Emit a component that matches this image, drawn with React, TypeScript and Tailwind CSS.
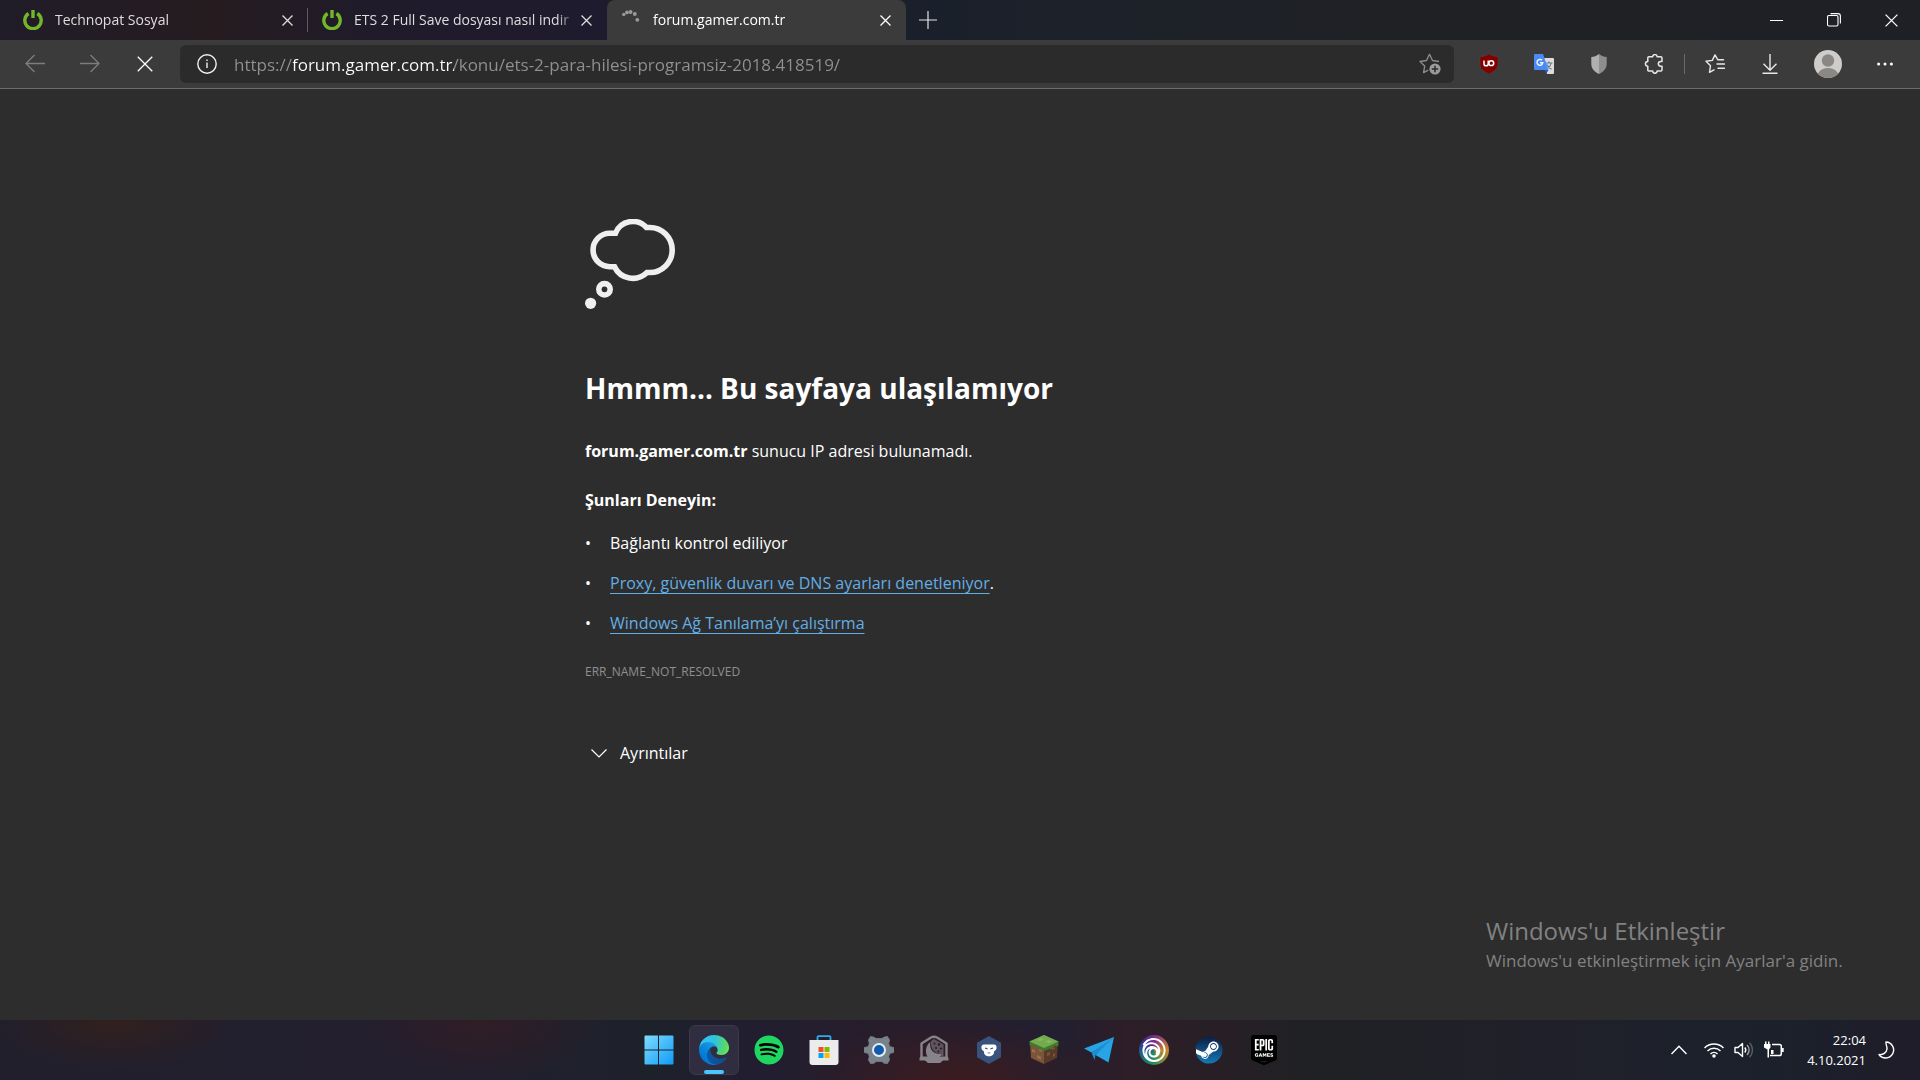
import { useState } from 'react';
import type { ReactNode } from 'react';
import { FaSpotify, FaSteam } from 'react-icons/fa';
import { SiEpicgames, SiUbisoft } from 'react-icons/si';

type IconProps = { className?: string };

function CloseIcon({ className = 'size-[11px]' }: IconProps) {
  return (
    <svg className={className} viewBox="0 0 11 11" fill="none" stroke="currentColor" strokeWidth="1.3">
      <path d="M.5.5l10 10M10.5.5l-10 10" vectorEffect="non-scaling-stroke" />
    </svg>
  );
}

function PowerIcon() {
  return (
    <svg className="size-5 shrink-0" viewBox="0 0 20 20" fill="none" stroke="#72b62b" strokeWidth="3.4">
      <path d="M5.6 3.5a8.2 8.2 0 1 0 8.8 0" />
      <path d="M10 0v8" />
    </svg>
  );
}

function SpinnerIcon() {
  return (
    <svg className="size-5 shrink-0" viewBox="0 0 20 20" fill="#9b9b9b">
      <circle cx="2.8" cy="4.4" r="1.7" />
      <circle cx="6" cy="2.4" r="1.9" />
      <circle cx="9.6" cy="2" r="1.9" />
      <circle cx="13.8" cy="4" r="1.9" />
      <circle cx="16.3" cy="9.8" r="1.9" />
    </svg>
  );
}

function ThoughtIcon() {
  return (
    <svg className="size-[90px]" viewBox="0 0 90 90" fill="none" stroke="#efefef" strokeWidth="5.6">
      <path d="M24.8 14.2H30.5A18.7 18.7 0 0 1 61.5 8.5H64.7A22.5 22.5 0 0 1 64.7 53.5H62A20.3 20.3 0 0 1 29.5 47.7H24.8A16.75 16.75 0 0 1 24.8 14.2Z" />
      <circle cx="19.5" cy="70.3" r="5.7" />
      <circle cx="5.6" cy="84.3" r="5.6" fill="#efefef" stroke="none" />
    </svg>
  );
}

function UblockIcon() {
  return (
    <svg className="size-5" viewBox="0 0 20 20">
      <path d="M10 0c3 2 6 2.600 9 2.700v7.600c0 4.500-4 7.200-9 9.700-5-2.500-9-5.200-9-9.700V2.700C4 2.600 7 2 10 0z" fill="#800000" stroke="#5f4a4a" strokeWidth=".4" />
      <g fill="none" stroke="#fff" strokeWidth="1.500">
        <path d="M5 6.500v3.200a2 2 0 0 0 4.200 0V6.500" />
        <circle cx="12.300" cy="9.200" r="2.400" />
      </g>
    </svg>
  );
}

function TranslateIcon() {
  return (
    <svg className="size-5" viewBox="0 0 20 20">
      <path d="M8 4h11a1 1 0 0 1 1 1v14a1 1 0 0 1-1 1h-6z" fill="#dcdcdc" />
      <path d="M11.500 9h7M15 7.500V9M17.300 9c-.6 2.600-2.300 4.600-4.300 5.800M13 10.500c.8 2 2.500 3.800 4.600 4.800" fill="none" stroke="#607988" strokeWidth="1.100" />
      <path d="M10.500 16h4l-2.500 4z" fill="#2a52b8" />
      <path d="M1 0h8l5.500 16H1a1 1 0 0 1-1-1V1a1 1 0 0 1 1-1z" fill="#4a8af4" />
      <path d="M8 6.300A2.900 2.900 0 1 0 8.800 8.700H6" fill="none" stroke="#f1f5fe" strokeWidth="1.400" />
    </svg>
  );
}

function ShieldIcon() {
  return (
    <svg className="size-5" viewBox="0 0 20 20">
      <path d="M10 0c2.500 2 5 2.800 7.700 3v7c0 4.800-3.500 7.800-7.700 10z" fill="#8e8e8e" />
      <path d="M10 0C7.500 2 5 2.800 2.300 3v7c0 4.800 3.500 7.800 7.700 10z" fill="#b0b0b0" />
    </svg>
  );
}

function PuzzleIcon() {
  return (
    <svg className="size-5" viewBox="0 0 20 20" fill="none" stroke="#e8e8e8" strokeWidth="1.500" strokeLinejoin="round">
      <path d="M5 2.800h3.700a2.200 2.200 0 0 1 4.400 0h3.600a1.300 1.300 0 0 1 1.300 1.300v3.400h-1.300a2.300 2.300 0 0 0 0 4.700h1.300v3.600a1.300 1.300 0 0 1-1.300 1.300h-3.600a2.200 2.200 0 0 1-4.400 0H5a1.200 1.200 0 0 1-1.200-1.300v-3.600a2.300 2.300 0 0 1 0-4.700V4.100A1.300 1.300 0 0 1 5 2.800z" />
    </svg>
  );
}

function FavoritesIcon() {
  return (
    <svg className="size-5" viewBox="0 0 20 20" fill="none" stroke="#e8e8e8" strokeWidth="1.400" strokeLinejoin="round" strokeLinecap="round">
      <path d="M18.500 5.800h-5.600L10 .9 7.300 6.400 1 7.300l4.500 4.400-1 6.600L9 15.800M12 10h7.500M13 14.200h6.500" />
    </svg>
  );
}

function AddFavoriteIcon() {
  return (
    <svg className="size-[22px]" viewBox="0 0 22 22" fill="none" stroke="#8b8b8b" strokeWidth="1.400" strokeLinejoin="round">
      <path d="M20 8.500l-6.500-1L10.500 1.300 7.500 7.500 1 8.500l4.700 4.600-1.100 6.500 4.600-2.400" />
      <circle cx="16" cy="16" r="5.600" fill="#9b9b9b" stroke="none" />
      <path d="M16 12.800v6.400M12.800 16h6.400" stroke="#2b2b2b" strokeWidth="1.500" />
    </svg>
  );
}

function DownloadIcon() {
  return (
    <svg className="size-5" viewBox="0 0 20 20" fill="none" stroke="#e8e8e8" strokeWidth="1.400">
      <path d="M10 0v16M3.500 9.800l6.500 6.500 6.500-6.500M2.500 19.300h15" />
    </svg>
  );
}

function AvatarIcon() {
  return (
    <svg className="size-7" viewBox="0 0 28 28">
      <clipPath id="avatarClip">
        <circle cx="14" cy="14" r="14" />
      </clipPath>
      <g clipPath="url(#avatarClip)">
        <rect width="28" height="28" fill="#cfcdcb" />
        <circle cx="14" cy="10.500" r="6.200" fill="#8b8785" />
        <ellipse cx="14" cy="26" rx="10.500" ry="8" fill="#8b8785" />
      </g>
    </svg>
  );
}

function WindowsIcon() {
  return (
    <svg className="size-[30px]" viewBox="0 0 30 30">
      <linearGradient id="winGradient" x1="0" y1="0" x2="1" y2="1" gradientUnits="objectBoundingBox">
        <stop offset="0" stopColor="#7fdcfc" />
        <stop offset="1" stopColor="#0f9bf8" />
      </linearGradient>
      <path d="M1.500.5H14v14H.5v-13a1 1 0 0 1 1-1zM15 .5h13.500a1 1 0 0 1 1 1v13H15zM.5 15.500H14v14H1.500a1 1 0 0 1-1-1zM15 15.500h14.500v13a1 1 0 0 1-1 1H15z" fill="url(#winGradient)" />
    </svg>
  );
}

function EdgeIcon() {
  return (
    <svg className="size-[30px]" viewBox="0 0 256 256">
      <defs>
        <linearGradient id="edgeDark" x1="60" y1="177" x2="237" y2="177" gradientUnits="userSpaceOnUse">
          <stop offset="0" stopColor="#0c59a4" />
          <stop offset="1" stopColor="#114a8b" />
        </linearGradient>
        <linearGradient id="edgeMid" x1="154" y1="100" x2="46" y2="218" gradientUnits="userSpaceOnUse">
          <stop offset="0" stopColor="#1b9de2" />
          <stop offset=".7" stopColor="#0680d7" />
          <stop offset="1" stopColor="#0078d4" />
        </linearGradient>
        <radialGradient id="edgeLight" cx="30" cy="45" r="235" gradientUnits="userSpaceOnUse">
          <stop offset="0" stopColor="#35c1f1" />
          <stop offset=".45" stopColor="#2fc2df" />
          <stop offset=".9" stopColor="#5bdc5c" />
          <stop offset="1" stopColor="#66eb6e" />
        </radialGradient>
      </defs>
      <path fill="url(#edgeDark)" d="M231.070 190.540c-3.380 1.760-6.850 3.340-10.420 4.730a101.400 101.400 0 0 1-35.680 6.400c-47.020 0-87.980-32.350-87.980-73.860a31.420 31.420 0 0 1 16.390-27.300c-42.530 1.790-53.460 46.100-53.460 72.070 0 73.420 67.670 80.870 82.250 80.870 7.860 0 19.720-2.290 26.840-4.540l1.300-.44a128.340 128.340 0 0 0 66.600-52.800 4 4 0 0 0-5.840-5.130z" />
      <path fill="url(#edgeMid)" d="M105.730 241.420a79.200 79.200 0 0 1-22.740-21.340 80.720 80.720 0 0 1 29.530-120c3.120-1.470 8.450-4.130 15.540-4a32.350 32.350 0 0 1 25.690 13 31.880 31.880 0 0 1 6.360 18.660c0-.21 24.460-79.600-80-79.600-43.900 0-80 41.660-80 78.210a130.150 130.150 0 0 0 12.110 56 128 128 0 0 0 156.380 67.110 75.550 75.550 0 0 1-62.780-8z" />
      <path fill="url(#edgeLight)" d="M152.330 148.860c-.81 1.050-3.300 2.500-3.300 5.660 0 2.610 1.700 5.120 4.720 7.230 14.380 10 41.490 8.680 41.560 8.680a59.560 59.560 0 0 0 30.270-8.350A61.380 61.380 0 0 0 256 109.190c.26-22.410-8-37.310-11.340-43.910C223.460 23.840 177.720 0 128 0A128 128 0 0 0 0 126.200c.48-36.540 36.800-66.050 80-66.050 3.500 0 23.460.34 42 10.070 16.340 8.580 24.900 18.940 30.850 29.210 6.180 10.670 7.280 24.150 7.280 29.520 0 5.370-2.740 13.330-7.800 19.910z" />
    </svg>
  );
}

function StoreIcon() {
  return (
    <svg className="size-[30px]" viewBox="0 0 30 30">
      <path d="M8.500 6V2.200a1 1 0 0 1 1-1h11a1 1 0 0 1 1 1V6" fill="none" stroke="#28b0ee" strokeWidth="1.800" />
      <path d="M.5 5h29v22a3 3 0 0 1-3 3h-23a3 3 0 0 1-3-3z" fill="#ececec" />
      <path d="M9.500 12h5v5h-5z" fill="#f25022" />
      <path d="M15.500 12h5v5h-5z" fill="#7fba00" />
      <path d="M9.500 18h5v5h-5z" fill="#00a4ef" />
      <path d="M15.500 18h5v5h-5z" fill="#ffb900" />
    </svg>
  );
}

function SettingsIcon() {
  return (
    <svg className="size-[30px]" viewBox="0 0 30 30">
      <path
        d="M6.500 1.500l3.500.7 2 1.300h6l2-1.300 3.500-.7 2 3.500-.8 3.500 1 3 4.300 1.200v4.600L25.700 18.500l-1 3 .8 3.500-2 3.500-3.500-.3-2-1.700h-6l-2 1.700-3.500.3-2-3.500.8-3.500-1-3L0 17.300v-4.600l4.300-1.200 1-3L4.500 5z"
        fill="#78828b"
        stroke="#78828b"
        strokeWidth=".8"
        strokeLinejoin="round"
      />
      <circle cx="15" cy="15" r="6" fill="#0f5cae" stroke="#e8ebee" strokeWidth="2" />
    </svg>
  );
}

function NightIcon() {
  return (
    <svg className="size-[30px]" viewBox="0 0 30 30">
      <path d="M2.500 22V8.500L12 2.500Q15 1 18 2.500l9.500 6V22" fill="none" stroke="#86838a" strokeWidth="2.400" strokeLinejoin="round" />
      <g fill="#86838a">
        <path d="M11.500 7c-1.500 6 1.500 12.500 11.500 12-1 2-3 3.500-5 3.500H9C5.500 17.500 6.500 10 11.500 7z" />
        <path d="M1.500 21.500h27l1 1.500v2.500h-5.500l-3 2.500h-12l-3-2.500H.5V23z" />
        <path d="M12 6l3-2 9.500 5.500V21H22l1-2c-6 0-10.500-4-11-9z" opacity=".55" />
      </g>
      <g fill="#2b1c28">
        <circle cx="15.500" cy="8.500" r="1" />
        <circle cx="20" cy="9.500" r="1.200" />
        <circle cx="17" cy="13" r="1" />
        <circle cx="22" cy="13.500" r="1.100" />
        <circle cx="19.500" cy="16.500" r="1.100" />
      </g>
    </svg>
  );
}

function GorillaIcon() {
  return (
    <svg className="size-[30px]" viewBox="0 0 30 30">
      <path d="M15 1l12 6.800v14.400L15 29 3 22.200V7.800z" fill="#38527d" />
      <path d="M10 9.500h10c2 0 3 2 2.500 4-.3 1.500-1.500 2.500-2.500 2.800.5 3-2 5-5 5s-5.500-2-5-5c-1-.3-2.200-1.300-2.500-2.800-.5-2 .5-4 2.500-4z" fill="#fff" />
      <path d="M11 13l2.500.9M19 13l-2.500.9M13.800 17.800h.8M15.400 17.800h.8" stroke="#38527d" strokeWidth="1.300" />
    </svg>
  );
}

function GrassBlockIcon() {
  return (
    <svg className="size-[30px]" viewBox="0 0 30 30">
      <path d="M1 8l14 6v15L2 23z" fill="#7b5539" />
      <path d="M29 8l-14 6v15l13-6z" fill="#573a28" />
      <path d="M3 14l3 1v3l-3-1zM8 20l4 1.700v3l-4-1.700zM10 14l3 1v2l-3-1z" fill="#9a6d4b" />
      <path d="M18 18l3-1v3l-3 1zM24 19l2-1v3l-2 1zM23 13l3-1v2l-3 1z" fill="#7b5539" />
      <path d="M15 0l14.500 6.500v4.300l-2.500.7v-1l-3 1.500v1.500l-3 1v-1L15 16l-3-1v-1l-3-.5v-1.500L5 11v1L.5 10V6.500z" fill="#3f7a2d" />
      <path d="M15 0l14.500 6.500L15 13 .5 6.500z" fill="#75aa51" />
      <path d="M12 3l3 1.300L11 6 8 5zM19 5l4 1.500-3 1.500-3-1.500z" fill="#87bc60" />
    </svg>
  );
}

function TelegramIcon() {
  return (
    <svg className="size-[30px]" viewBox="0 0 30 30">
      <path d="M30 2L0 13.500l7.500 4L22 9 11.500 20l13 7.500z" fill="#28a4e6" />
      <path d="M7.500 17.500L30 2 11.500 20l-1 5z" fill="#1c8fd0" />
    </svg>
  );
}

function UbisoftIcon() {
  return (
    <span className="flex size-[30px] items-center justify-center rounded-full bg-[conic-gradient(#7b2a8c,#c8862c_90deg,#7d8c3a_140deg,#1d8a5f_190deg,#1c6a8c_250deg,#3b2c96_310deg,#7b2a8c)]">
      <SiUbisoft className="size-6 text-white" />
    </span>
  );
}

function SteamIcon() {
  return (
    <span className="flex size-7 rounded-full bg-[radial-gradient(circle_closest-side,#fff_92%,transparent_94%)]">
      <svg className="size-7" viewBox="0 0 28 28">
        <linearGradient id="steamGradient" x1="0" y1="0" x2="0" y2="1">
          <stop offset="0" stopColor="#0f1c40" />
          <stop offset="1" stopColor="#1579b8" />
        </linearGradient>
        <FaSteam size={28} fill="url(#steamGradient)" />
      </svg>
    </span>
  );
}

function EpicIcon() {
  return (
    <span className="flex h-[30px] items-center bg-[linear-gradient(#fff,#fff)] bg-[length:20px_22px] bg-[position:center_4px] bg-no-repeat">
      <SiEpicgames className="size-[30px] text-black" />
    </span>
  );
}

const apps: { name: string; icon: ReactNode; active?: boolean }[] = [
  { name: 'Başlat', icon: <WindowsIcon /> },
  { name: 'Microsoft Edge', icon: <EdgeIcon />, active: true },
  { name: 'Spotify', icon: <FaSpotify className="size-[30px] rounded-full bg-[radial-gradient(circle,#000_60%,transparent_62%)] text-[#1ed760]" /> },
  { name: 'Microsoft Store', icon: <StoreIcon /> },
  { name: 'Ayarlar', icon: <SettingsIcon /> },
  { name: 'Gece', icon: <NightIcon /> },
  { name: 'Goril', icon: <GorillaIcon /> },
  { name: 'Minecraft', icon: <GrassBlockIcon /> },
  { name: 'Telegram', icon: <TelegramIcon /> },
  { name: 'Ubisoft Connect', icon: <UbisoftIcon /> },
  { name: 'Steam', icon: <SteamIcon /> },
  { name: 'Epic Games', icon: <EpicIcon /> },
];

const extensions = [
  { name: 'uBlock Origin', icon: <UblockIcon /> },
  { name: 'Google Çeviri', icon: <TranslateIcon /> },
  { name: 'Koruma', icon: <ShieldIcon /> },
  { name: 'Uzantılar', icon: <PuzzleIcon /> },
];

const tabs = [
  { title: 'Technopat Sosyal', icon: <PowerIcon /> },
  { title: 'ETS 2 Full Save dosyası nasıl indir', icon: <PowerIcon /> },
  { title: 'forum.gamer.com.tr', icon: <SpinnerIcon /> },
];

function TabBar() {
  const activeTab = 2;

  return (
    <header className="flex h-10 bg-[linear-gradient(90deg,#201c28,#261c20_11%,#1f1b2b_20%,#1f1b2e_31%,#1a202b_48%,#1c212a_55%,#202124_75%,#1f2026)]">
      {tabs.map((tab, i) => (
        <div
          key={tab.title}
          className={`flex w-[299px] min-w-0 items-center pr-[15px] pl-[14px] first:w-[308px] first:pl-[23px] ${
            i === activeTab ? 'rounded-t-lg bg-[#3b3b3b] text-white' : 'text-[#dedede]'
          }`}
        >
          {tab.icon}
          <button className="ml-3 min-w-0 flex-1 overflow-hidden mask-r-from-[calc(100%-20px)] text-left text-sm whitespace-nowrap">
            {tab.title}
          </button>
          <button className="ml-1 shrink-0" aria-label="Sekmeyi kapat">
            <CloseIcon />
          </button>
          {i === 0 && <span className="-mr-[15px] ml-[14px] h-6 w-px bg-[#5d5b60]" />}
        </div>
      ))}
      <button className="flex w-11 items-center justify-center text-[#e4e4e4]" aria-label="Yeni sekme">
        <svg className="size-[18px]" viewBox="0 0 18 18" stroke="currentColor" strokeWidth="1.200">
          <path d="M9 0v18M0 9h18" />
        </svg>
      </button>
      <div className="ml-auto flex text-white">
        <button className="flex w-[57px] items-center justify-center" aria-label="Simge durumuna küçült">
          <span className="h-px w-[13px] bg-white" />
        </button>
        <button className="flex w-[57px] items-center justify-center" aria-label="Önceki boyut">
          <svg className="size-[14px]" viewBox="0 0 14 14" fill="none" stroke="currentColor" strokeWidth="1.100">
            <rect x=".5" y="2.500" width="10.500" height="10.500" rx="1.500" />
            <path d="M3.500.6H11A2.400 2.400 0 0 1 13.400 3v7.500" />
          </svg>
        </button>
        <button className="flex w-[58px] items-center justify-center" aria-label="Kapat">
          <CloseIcon className="size-[13px]" />
        </button>
      </div>
    </header>
  );
}

function Toolbar() {
  const [url, setUrl] = useState('https://forum.gamer.com.tr/konu/ets-2-para-hilesi-programsiz-2018.418519/');

  return (
    <nav className="flex h-[49px] items-center border-b border-[#6b6b6b] bg-[#3b3b3b]">
      <div className="flex w-[180px] items-center pl-[15px] text-[#7d7d7d]">
        <button className="flex w-10 justify-center" aria-label="Geri">
          <svg className="size-5" viewBox="0 0 20 20" fill="none" stroke="currentColor" strokeWidth="1.300">
            <path d="M20 9.500H1M9.500 1L1 9.500 9.500 18" />
          </svg>
        </button>
        <button className="ml-[15px] flex w-10 justify-center" aria-label="İleri">
          <svg className="size-5" viewBox="0 0 20 20" fill="none" stroke="currentColor" strokeWidth="1.300">
            <path d="M0 9.500h19M10.500 1L19 9.500 10.500 18" />
          </svg>
        </button>
        <button className="ml-[15px] flex w-10 justify-center text-white" aria-label="Durdur">
          <CloseIcon className="size-4" />
        </button>
      </div>
      <div className="flex h-[38px] flex-1 items-center rounded-md bg-[#2b2b2b] pr-[13px] pl-[17px]">
        <button aria-label="Site bilgileri">
          <svg className="size-5" viewBox="0 0 20 20" fill="none" stroke="#f0f0f0" strokeWidth="1.400">
            <circle cx="10" cy="10" r="9.200" />
            <path d="M10 8.500V14M10 5.500V7" />
          </svg>
        </button>
        {/* The host part of the address is lit, the rest stays grey */}
        <input
          type="text"
          aria-label="Adres çubuğu"
          value={url}
          onChange={(e) => setUrl(e.target.value)}
          className="ml-[17px] h-full flex-1 bg-[linear-gradient(90deg,#919191_59px,#fff_59px,#fff_220px,#919191_220px)] bg-clip-text text-[17px] text-transparent outline-none"
        />
        <button aria-label="Sık kullanılanlara ekle">
          <AddFavoriteIcon />
        </button>
      </div>
      <div className="ml-[15px] flex items-center gap-[15px]">
        {extensions.map((ext) => (
          <button key={ext.name} className="flex w-10 justify-center" aria-label={ext.name}>
            {ext.icon}
          </button>
        ))}
      </div>
      <span className="mx-[10px] h-5 w-px bg-[#6a6a6a]" />
      <div className="mr-[15px] flex items-center gap-[15px]">
        <button className="flex w-10 justify-center" aria-label="Sık kullanılanlar">
          <FavoritesIcon />
        </button>
        <button className="flex w-10 justify-center" aria-label="İndirilenler">
          <DownloadIcon />
        </button>
        <button className="flex w-[45px] justify-center" aria-label="Profil">
          <AvatarIcon />
        </button>
        <button className="flex w-10 justify-center" aria-label="Ayarlar ve daha fazlası">
          <svg className="h-1 w-4" viewBox="0 0 16 4" fill="#fff">
            <circle cx="1.600" cy="2" r="1.500" />
            <circle cx="8" cy="2" r="1.500" />
            <circle cx="14.400" cy="2" r="1.500" />
          </svg>
        </button>
      </div>
    </nav>
  );
}

function ErrorPage() {
  return (
    <main className="relative flex-1 bg-[#2d2d2d] px-6 pt-[130px] text-base text-white">
      <div className="mx-auto max-w-[750px]">
        <ThoughtIcon />
        <h1 className="mt-[59px] text-[28px] leading-10 font-bold">Hmmm… Bu sayfaya ulaşılamıyor</h1>
        <p className="mt-[31px] leading-6">
          <strong>forum.gamer.com.tr</strong> sunucu IP adresi bulunamadı.
        </p>
        <h2 className="mt-[25px] leading-6 font-bold">Şunları Deneyin:</h2>
        <ul className="mt-[19px] space-y-4 leading-6">
          <li className="flex">
            <span className="w-[25px]">•</span>
            Bağlantı kontrol ediliyor
          </li>
          <li className="flex">
            <span className="w-[25px]">•</span>
            <p>
              <a href="#proxy" className="text-[#63ade5] underline decoration-1 underline-offset-4 [text-decoration-skip-ink:none]">
                Proxy, güvenlik duvarı ve DNS ayarları denetleniyor
              </a>
              .
            </p>
          </li>
          <li className="flex">
            <span className="w-[25px]">•</span>
            <p>
              <a href="#tanilama" className="text-[#63ade5] underline decoration-1 underline-offset-4 [text-decoration-skip-ink:none]">
                Windows Ağ Tanılama’yı çalıştırma
              </a>
            </p>
          </li>
        </ul>
        <p className="mt-[27px] text-xs leading-5 text-[#8f8f8f]">ERR_NAME_NOT_RESOLVED</p>
        <button className="mt-[59px] flex items-center gap-[13px] pl-[6px] leading-6">
          <svg className="h-[9px] w-4" viewBox="0 0 16 9" fill="none" stroke="currentColor" strokeWidth="1.200">
            <path d="M.5.5L8 8 15.500.5" />
          </svg>
          Ayrıntılar
        </button>
      </div>
      {/* Activation watermark */}
      <div className="absolute right-20 bottom-[45px] w-[354px] whitespace-nowrap text-[#828282]">
        <p className="text-2xl leading-8">Windows'u Etkinleştir</p>
        <p className="text-[17px] leading-7">Windows'u etkinleştirmek için Ayarlar'a gidin.</p>
      </div>
    </main>
  );
}

function Taskbar() {
  return (
    <footer className="grid h-[60px] grid-cols-[1fr_auto_1fr] items-center bg-[radial-gradient(120px_50px_at_6%_0,#32201d,transparent),radial-gradient(120px_60px_at_25%_0,#311d25,transparent),radial-gradient(160px_60px_at_50%_100%,#3b1c20,transparent),linear-gradient(90deg,#211f2c,#231f2f_22%,#1d212a_34%,#201e30_38%,#281d2b_47%,#211f31_55%,#2e1e27_59%,#202124_68%,#20202a_80%,#1b212b_92%,#1f1d29)]">
      <div className="col-start-2 flex gap-[5px] pl-[2px]">
        {apps.map((app) => (
          <button
            key={app.name}
            aria-label={app.name}
            className={`relative flex size-[50px] items-center justify-center rounded-md border ${
              app.active ? 'border-[#3b3848] bg-[#302d40]' : 'border-transparent'
            }`}
          >
            {app.icon}
            {app.active && <span className="absolute bottom-0 h-1 w-5 rounded-full bg-[#4cc2ff]" />}
          </button>
        ))}
      </div>
      <div className="flex items-center justify-end pr-6 text-white">
        <button aria-label="Gizli simgeleri göster">
          <svg className="h-[10px] w-4" viewBox="0 0 16 10" fill="none" stroke="currentColor" strokeWidth="1.400">
            <path d="M.5 9L8 1.200 15.500 9" />
          </svg>
        </button>
        <button className="ml-[17px] flex gap-[10px]" aria-label="Hızlı ayarlar">
          <svg className="size-5" viewBox="0 0 20 20" fill="none" stroke="currentColor" strokeWidth="1.500">
            <path d="M.5 8a13.400 13.400 0 0 1 19 0M3.500 11a9.200 9.200 0 0 1 13 0M6.500 14a5 5 0 0 1 7 0" />
            <circle cx="10" cy="16" r="1.800" fill="currentColor" stroke="none" />
          </svg>
          <svg className="size-5" viewBox="0 0 20 20" fill="none" stroke="currentColor" strokeWidth="1.400">
            <path d="M1 7.500h3L8.500 3.500v13L4 12.500H1z" strokeLinejoin="round" />
            <path d="M10.800 7.500a4 4 0 0 1 0 5" />
            <path d="M13 5a7 7 0 0 1 0 10" stroke="#a0a0a0" />
            <path d="M15.500 2.800a10.300 10.300 0 0 1 0 14.400" stroke="#5c5c5c" />
          </svg>
          <svg className="size-5" viewBox="0 0 20 20" fill="none" stroke="currentColor" strokeWidth="1.500">
            <path d="M8 4.500h7.500a1.800 1.800 0 0 1 1.800 1.800v7.400a1.800 1.800 0 0 1-1.800 1.800H6" />
            <path d="M18.500 8v4" strokeWidth="2.400" />
            <path d="M0 4h1V1.500h1.500V4H4V1.500h1.500V4h1v3.500L5 9.500v8H3.500v-8L0 7.500zM7 10h2.500v4H7z" fill="currentColor" stroke="none" />
          </svg>
        </button>
        <button className="ml-[23px] text-right text-[13px] leading-5" aria-label="Saat ve tarih">
          <span className="block">22:04</span>
          <span className="block">4.10.2021</span>
        </button>
        <button className="ml-3" aria-label="Odaklanma yardımı">
          <svg className="size-[18px]" viewBox="0 0 18 18" fill="none" stroke="currentColor" strokeWidth="1.400" strokeLinejoin="round">
            <path d="M8 1a8 8 0 1 1-7 12.500c4 .5 7.500-1.500 8-5.500.3-2.500-1.500-4.500-1-7z" />
          </svg>
        </button>
      </div>
    </footer>
  );
}

export default function App() {
  return (
    <div className="flex min-h-screen flex-col bg-[#2d2d2d] font-['Open_Sans','Noto_Sans',sans-serif]">
      <TabBar />
      <Toolbar />
      <ErrorPage />
      <Taskbar />
    </div>
  );
}
